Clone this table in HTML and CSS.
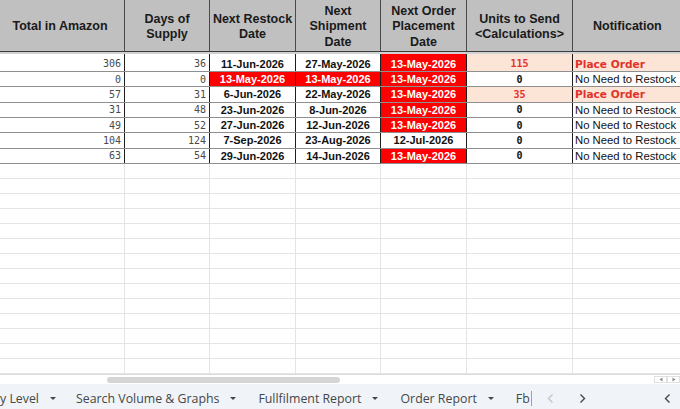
FILE: index.html
```html
<!DOCTYPE html>
<html>
<head>
<meta charset="utf-8">
<link rel="stylesheet" href="styles.css">
</head>
<body>
<div class="sheet">
  <div class="grid">
    <div class="row head">
      <div class="c a">Total in Amazon</div>
      <div class="c b">Days of<br>Supply</div>
      <div class="c c3">Next Restock<br>Date</div>
      <div class="c d">Next<br>Shipment<br>Date</div>
      <div class="c e">Next Order<br>Placement<br>Date</div>
      <div class="c f">Units to Send<br>&lt;Calculations&gt;</div>
      <div class="c g">Notification</div>
    </div>

    <div class="row data first">
      <div class="c a num">306</div><div class="c b num">36</div>
      <div class="c c3 date">11-Jun-2026</div><div class="c d date">27-May-2026</div>
      <div class="c e date red">13-May-2026</div>
      <div class="c f units peach hot">115</div><div class="c g note peach place">Place Order</div>
    </div>
    <div class="row data">
      <div class="c a num">0</div><div class="c b num">0</div>
      <div class="c c3 date red">13-May-2026</div><div class="c d date red">13-May-2026</div>
      <div class="c e date red">13-May-2026</div>
      <div class="c f units">0</div><div class="c g note">No Need to Restock</div>
    </div>
    <div class="row data">
      <div class="c a num">57</div><div class="c b num">31</div>
      <div class="c c3 date">6-Jun-2026</div><div class="c d date">22-May-2026</div>
      <div class="c e date red">13-May-2026</div>
      <div class="c f units peach hot">35</div><div class="c g note peach place">Place Order</div>
    </div>
    <div class="row data">
      <div class="c a num">31</div><div class="c b num">48</div>
      <div class="c c3 date">23-Jun-2026</div><div class="c d date">8-Jun-2026</div>
      <div class="c e date red">13-May-2026</div>
      <div class="c f units">0</div><div class="c g note">No Need to Restock</div>
    </div>
    <div class="row data">
      <div class="c a num">49</div><div class="c b num">52</div>
      <div class="c c3 date">27-Jun-2026</div><div class="c d date">12-Jun-2026</div>
      <div class="c e date red">13-May-2026</div>
      <div class="c f units">0</div><div class="c g note">No Need to Restock</div>
    </div>
    <div class="row data">
      <div class="c a num">104</div><div class="c b num">124</div>
      <div class="c c3 date">7-Sep-2026</div><div class="c d date">23-Aug-2026</div>
      <div class="c e date">12-Jul-2026</div>
      <div class="c f units">0</div><div class="c g note">No Need to Restock</div>
    </div>
    <div class="row data">
      <div class="c a num">63</div><div class="c b num">54</div>
      <div class="c c3 date">29-Jun-2026</div><div class="c d date">14-Jun-2026</div>
      <div class="c e date red">13-May-2026</div>
      <div class="c f units">0</div><div class="c g note">No Need to Restock</div>
    </div>

    <div class="row blank"><div class="c a"></div><div class="c b"></div><div class="c c3"></div><div class="c d"></div><div class="c e"></div><div class="c f"></div><div class="c g"></div></div>
    <div class="row blank"><div class="c a"></div><div class="c b"></div><div class="c c3"></div><div class="c d"></div><div class="c e"></div><div class="c f"></div><div class="c g"></div></div>
    <div class="row blank"><div class="c a"></div><div class="c b"></div><div class="c c3"></div><div class="c d"></div><div class="c e"></div><div class="c f"></div><div class="c g"></div></div>
    <div class="row blank"><div class="c a"></div><div class="c b"></div><div class="c c3"></div><div class="c d"></div><div class="c e"></div><div class="c f"></div><div class="c g"></div></div>
    <div class="row blank"><div class="c a"></div><div class="c b"></div><div class="c c3"></div><div class="c d"></div><div class="c e"></div><div class="c f"></div><div class="c g"></div></div>
    <div class="row blank"><div class="c a"></div><div class="c b"></div><div class="c c3"></div><div class="c d"></div><div class="c e"></div><div class="c f"></div><div class="c g"></div></div>
    <div class="row blank"><div class="c a"></div><div class="c b"></div><div class="c c3"></div><div class="c d"></div><div class="c e"></div><div class="c f"></div><div class="c g"></div></div>
    <div class="row blank"><div class="c a"></div><div class="c b"></div><div class="c c3"></div><div class="c d"></div><div class="c e"></div><div class="c f"></div><div class="c g"></div></div>
    <div class="row blank"><div class="c a"></div><div class="c b"></div><div class="c c3"></div><div class="c d"></div><div class="c e"></div><div class="c f"></div><div class="c g"></div></div>
    <div class="row blank"><div class="c a"></div><div class="c b"></div><div class="c c3"></div><div class="c d"></div><div class="c e"></div><div class="c f"></div><div class="c g"></div></div>
    <div class="row blank"><div class="c a"></div><div class="c b"></div><div class="c c3"></div><div class="c d"></div><div class="c e"></div><div class="c f"></div><div class="c g"></div></div>
    <div class="row blank"><div class="c a"></div><div class="c b"></div><div class="c c3"></div><div class="c d"></div><div class="c e"></div><div class="c f"></div><div class="c g"></div></div>
    <div class="row blank"><div class="c a"></div><div class="c b"></div><div class="c c3"></div><div class="c d"></div><div class="c e"></div><div class="c f"></div><div class="c g"></div></div>
    <div class="row blank"><div class="c a"></div><div class="c b"></div><div class="c c3"></div><div class="c d"></div><div class="c e"></div><div class="c f"></div><div class="c g"></div></div>
    <div class="row blank"><div class="c a"></div><div class="c b"></div><div class="c c3"></div><div class="c d"></div><div class="c e"></div><div class="c f"></div><div class="c g"></div></div>
  </div>

  <div class="hscroll">
    <div class="thumb"></div>
    <div class="sbtns">
      <span class="sbtn"><svg width="4" height="5" viewBox="0 0 4 5"><path d="M3.5 0.5 L0.5 2.5 L3.5 4.5 Z" fill="#8a8a8a"/></svg></span>
      <span class="sbtn"><svg width="4" height="5" viewBox="0 0 4 5"><path d="M0.5 0.5 L3.5 2.5 L0.5 4.5 Z" fill="#8a8a8a"/></svg></span>
    </div>
  </div>

  <div class="tabs">
    <div class="tab"><span>y Level</span><i class="caret"></i></div>
    <div class="tab"><span>Search Volume &amp; Graphs</span><i class="caret"></i></div>
    <div class="tab"><span>Fullfilment Report</span><i class="caret"></i></div>
    <div class="tab"><span>Order Report</span><i class="caret"></i></div>
    <div class="tab cut"><span>Fb</span></div>
    <div class="nav">
      <svg class="chev off" width="7" height="11" viewBox="0 0 7 11"><path d="M5.5 1.5 L1.5 5.5 L5.5 9.5" fill="none" stroke="#c4c7c5" stroke-width="1.4"/></svg>
      <svg class="chev next" width="7" height="11" viewBox="0 0 7 11"><path d="M1.5 1.5 L5.5 5.5 L1.5 9.5" fill="none" stroke="#444746" stroke-width="1.4"/></svg>
      <svg class="chev last" width="7" height="11" viewBox="0 0 7 11"><path d="M5.5 1.5 L1.5 5.5 L5.5 9.5" fill="none" stroke="#444746" stroke-width="1.4"/></svg>
    </div>
  </div>
</div>
</body>
</html>
```

FILE: styles.css
```css
html, body {
  margin: 0;
  padding: 0;
  background: #ffffff;
  overflow: hidden;
}

.sheet {
  width: 680px;
  height: 409px;
  overflow: hidden;
  display: flex;
  flex-direction: column;
}

.grid {
  height: 375px;
  flex: none;
  box-sizing: border-box;
  border-bottom: 1px solid #dcdcdc;
  overflow: hidden;
}

.row {
  display: flex;
  box-sizing: border-box;
  width: 800px;
}

.c {
  box-sizing: border-box;
  flex: none;
  display: flex;
  align-items: center;
  overflow: hidden;
  white-space: nowrap;
}

.a { width: 125px; }
.b { width: 85px; }
.c3 { width: 86px; }
.d { width: 85px; }
.e { width: 86px; }
.f { width: 106px; }
.g { width: 130px; }

/* header */
.head {
  height: 52px;
  background: #c0c0c0;
  border-bottom: 1px solid #3c3c3c;
}
.head .c {
  justify-content: center;
  text-align: center;
  padding-top: 3px;
  border-right: 1px solid #4a4a4a;
  font-family: "Liberation Sans", Arial, sans-serif;
  font-weight: bold;
  font-size: 12.5px;
  line-height: 15.5px;
  color: #1a1a1a;
}
.head .a { padding-right: 4px; }
.head .g { justify-content: flex-start; padding-left: 20px; }

/* data rows */
.data {
  height: 15.34px;
  border-bottom: 1px solid #8f8f8f;
}
.data.first {
  height: 20px;
  border-top: 2px solid #d2d2d2;
}
.data .c {
  border-right: 1px solid #1e1e1e;
  height: 100%;
}
.data.first .c { padding-top: 2px; }

.num {
  justify-content: flex-end;
  padding-right: 3px;
  font-family: "DejaVu Sans Mono", "Liberation Mono", monospace;
  font-size: 10px;
  color: #4a4a4a;
}

.date {
  justify-content: center;
  font-family: "Liberation Sans", Arial, sans-serif;
  font-weight: bold;
  font-size: 11px;
  color: #111111;
}

.units {
  justify-content: center;
  font-family: "DejaVu Sans Mono", "Liberation Mono", monospace;
  font-weight: bold;
  font-size: 10px;
  color: #111111;
}
.units.hot { color: #e2332b; }

.note {
  padding-left: 2px;
  font-family: "Liberation Sans", Arial, sans-serif;
  font-size: 11.3px;
  color: #111111;
}
.note.place {
  color: #e2332b;
  font-family: "DejaVu Sans", Verdana, sans-serif;
  font-weight: bold;
  font-size: 10.6px;
}

.red {
  background: #ff0000;
  color: #ffffff;
}
.peach { background: #fce4d6; }

/* blank grid */
.blank {
  height: 15px;
  border-bottom: 1px solid #e4e4e4;
}
.blank .c {
  border-right: 1px solid #e4e4e4;
  height: 100%;
}

/* horizontal scrollbar */
.hscroll {
  height: 9px;
  flex: none;
  display: flex;
  align-items: center;
  background: #ffffff;
}
.thumb {
  margin-left: 107px;
  width: 233px;
  height: 6px;
  border-radius: 3px;
  background: #d5d5d5;
}
.sbtns {
  margin-left: auto;
  display: flex;
  align-self: flex-start;
  margin-top: 1px;
}
.sbtn {
  width: 13px;
  height: 7px;
  box-sizing: border-box;
  border: 1px solid #e0e0e0;
  display: flex;
  align-items: center;
  justify-content: center;
}

/* sheet tabs */
.tabs {
  flex: 1;
  background: #f0f4f9;
  display: flex;
  align-items: center;
  padding-top: 3px;
  box-sizing: border-box;
  font-family: "Open Sans", "Roboto", sans-serif;
  font-size: 12.35px;
  color: #444746;
  white-space: nowrap;
}
.tab {
  display: flex;
  align-items: center;
  gap: 11px;
  margin-right: 22px;
  flex: none;
}
.tab:first-child { margin-right: 20px; }
.caret {
  display: block;
  width: 0;
  height: 0;
  border-left: 3px solid transparent;
  border-right: 3px solid transparent;
  border-top: 3.5px solid #444746;
}
.tab.cut {
  margin-right: 0;
  padding-right: 1px;
  border-right: 1px solid #9aa0a6;
  height: 15px;
}
.nav {
  display: flex;
  align-items: center;
  flex: none;
}
.chev { display: block; }
.chev.off { margin-left: 15px; }
.chev.next { margin-left: 25px; }
.chev.last { margin-left: 78px; }
```
